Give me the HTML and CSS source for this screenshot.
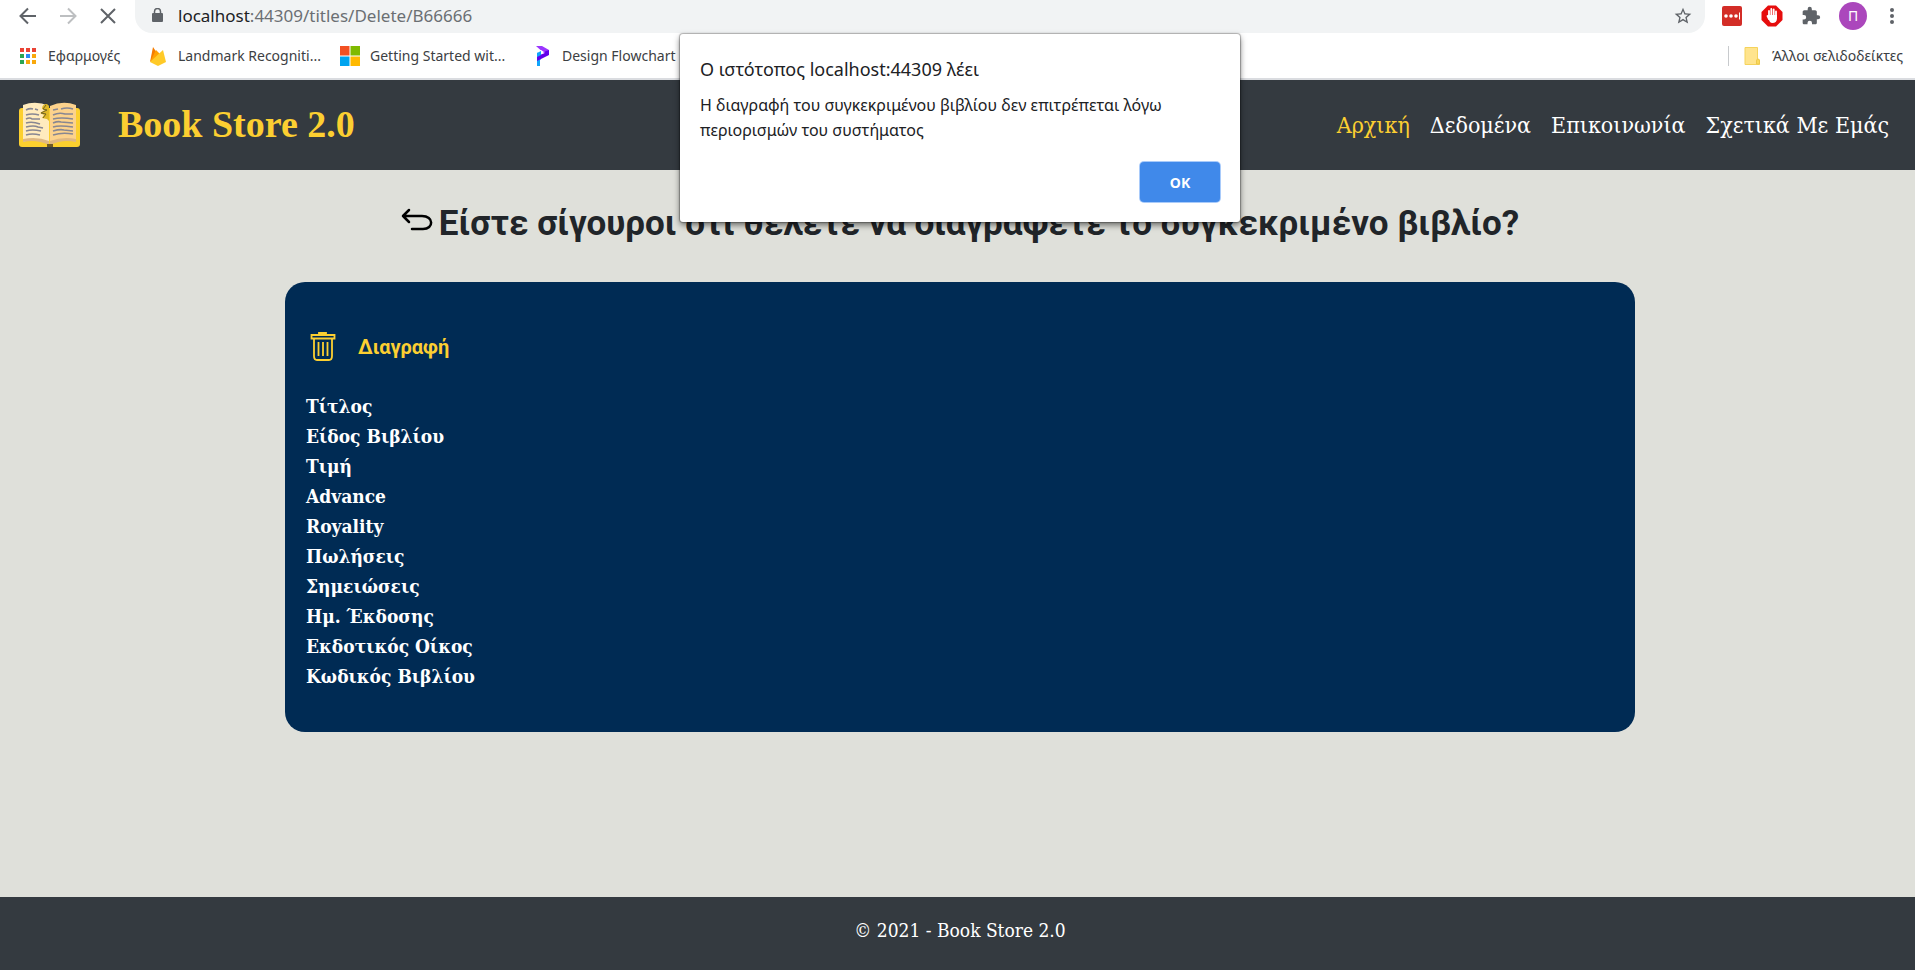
FILE: index.html
```html
<!DOCTYPE html>
<html lang="el">
<head>
<meta charset="utf-8">
<title>Book Store 2.0</title>
<link rel="stylesheet" href="styles.css">
</head>
<body>
<div class="browser">
  <div class="toolbar">
    <div class="nav-buttons">
      <button type="button" class="icon-button" aria-label="Πίσω"><svg width="20" height="20" viewBox="0 0 20 20" fill="none" stroke="#5f6368" stroke-width="2"><path d="M18 10H3M10 2.500L2.500 10l7.500 7.500"/></svg></button>
      <button type="button" class="icon-button" aria-label="Εμπρός"><svg width="20" height="20" viewBox="0 0 20 20" fill="none" stroke="#bdbfc1" stroke-width="2"><path d="M2 10h15M10 2.500l7.500 7.500-7.500 7.500"/></svg></button>
      <button type="button" class="icon-button" aria-label="Διακοπή"><svg width="20" height="20" viewBox="0 0 20 20" fill="none" stroke="#5f6368" stroke-width="2"><path d="M3 3l14 14M17 3L3 17"/></svg></button>
    </div>
    <div class="address">
      <svg width="12" height="16" viewBox="0 0 12 16"><rect x="1" y="5" width="11" height="9" rx="1" fill="#5f6368"/><path d="M3.500 6V3.500a3 3 0 0 1 6 0V6" fill="none" stroke="#5f6368" stroke-width="1.500"/></svg>
      <span class="url"><span class="host">localhost</span>:44309/titles/Delete/B66666</span>
      <svg class="star" width="20" height="20" viewBox="0 0 24 24" fill="#5f6368"><path d="M22 9.240l-7.190-.62L12 2 9.190 8.630 2 9.240l5.460 4.730L5.820 21 12 17.270 18.180 21l-1.630-7.030L22 9.240zM12 15.400l-3.760 2.270 1-4.280-3.320-2.880 4.380-.38L12 6.100l1.710 4.040 4.380.38-3.320 2.880 1 4.280L12 15.400z"/></svg>
    </div>
    <div class="extensions">
      <svg width="22" height="22" viewBox="0 0 22 22"><rect x="1" y="1" width="20" height="20" rx="2" fill="#d32d27"/><g fill="#fff"><circle cx="5" cy="11" r="1.800"/><circle cx="10" cy="11" r="1.800"/><circle cx="15" cy="11" r="1.800"/><path d="M18 7.500h1v7h-1z"/></g></svg>
      <svg width="22" height="22" viewBox="0 0 22 22"><path d="M7 .5h8L21.500 7v8L15 21.500H7L.5 15V7z" fill="#e60d0d"/><g fill="none" stroke="#fff" stroke-width="1.800" stroke-linecap="round"><path d="M8 11V6M10.300 10V4M12.700 10V4.500M15 12V6.500M8 14l-1.500-3"/></g><path d="M7 10h9v3.500c0 3-2 4.500-4.500 4.500S8.500 16 7 13z" fill="#fff"/></svg>
      <svg width="20" height="20" viewBox="0 0 24 24" fill="#5f6368"><path d="M20.500 11H19V7c0-1.100-.9-2-2-2h-4V3.500a2.500 2.500 0 0 0-5 0V5H4c-1.100 0-2 .9-2 2v3.800h1.500a2.700 2.700 0 0 1 0 5.400H2V20c0 1.100.9 2 2 2h3.800v-1.500a2.700 2.700 0 0 1 5.400 0V22H17c1.100 0 2-.9 2-2v-4h1.500a2.500 2.500 0 0 0 0-5z"/></svg>
      <button type="button" class="avatar">Π</button>
      <svg width="14" height="18" viewBox="0 0 14 18" fill="#5f6368"><circle cx="7" cy="3" r="2"/><circle cx="7" cy="9" r="2"/><circle cx="7" cy="15" r="2"/></svg>
    </div>
  </div>
  <div class="bookmarks">
    <a href="#" class="bookmark apps"><svg width="16" height="16" viewBox="0 0 16 16"><path d="M0 0h4v4H0zM6 0h4v4H6zM12 0h4v4h-4z" fill="#ea4335"/><path d="M0 6h4v4H0zM0 12h4v4H0z" fill="#2aa553"/><path d="M6 6h4v4H6z" fill="#2a8af5"/><path d="M12 6h4v4h-4zM6 12h4v4H6zM12 12h4v4h-4z" fill="#f9a80b"/></svg>Εφαρμογές</a>
    <a href="#" class="bookmark firebase"><svg width="16" height="20" viewBox="0 0 16 20"><path d="M0 16L3 1l4 6z" fill="#f57c00"/><path d="M0 16L6 4l5 5z" fill="#ffa000"/><path d="M0 16L13 4l3 12-8 4z" fill="#ffca28"/></svg>Landmark Recogniti...</a>
    <a href="#" class="bookmark microsoft"><svg width="20" height="20" viewBox="0 0 20 20"><path d="M0 0h9.500v9.500H0z" fill="#f25022"/><path d="M10.500 0H20v9.500h-9.500z" fill="#7fba00"/><path d="M0 10.500h9.500V20H0z" fill="#00a4ef"/><path d="M10.500 10.500H20V20h-9.500z" fill="#ffb900"/></svg>Getting Started wit...</a>
    <a href="#" class="bookmark flowchart"><svg width="14" height="20" viewBox="0 0 14 20"><path d="M1 7l4-2v8l-1 1v6H1z" fill="#10a5fb"/><path d="M0 0h6l7 4v2L9 8z" fill="#9b35ff"/><path d="M9 5.500L13 4v5L1 15v-5l8-3z" fill="#6200ea"/><path d="M1 6l4-2 3 2-4 2.500z" fill="#fff"/><path d="M1 7l4-2v4l-4 2z" fill="#10a5fb"/></svg>Design Flowchart</a>
    <a href="#" class="bookmark other"><svg width="16" height="18" viewBox="0 0 16 18"><path d="M1 .5h12.500V12l2 1v4.500H1z" fill="#ffe48d" stroke="#f5d35c"/><path d="M12.500 17v-3q0-2 1.500-2t1.500 2v3z" fill="#fbd95c" stroke="#edc84c"/></svg>Άλλοι σελιδοδείκτες</a>
  </div>
</div>
<header class="site-header">
  <a href="#" class="brand">
    <svg width="62" height="46" viewBox="0 0 62 46"><rect x="0" y="6" width="61" height="39" rx="3" fill="#fcd02f"/><path d="M4 3Q17-2 30 4v37Q17 34 4 40z" fill="#ffebbd"/><path d="M31 4Q44-2 57 3v37q-13-6-26 1z" fill="#fcd28c"/><path d="M4 37q14-3 26 2v4Q17 37 4 40zM31 39q13-5 26-2v3q-13-3-26 3z" fill="#dfb883"/><path d="M28 42h6v3h-6z" fill="#6d5826"/><g fill="none" stroke="#888792" stroke-width="1.600"><path d="M7 8q4-2 7-1M16 7l3 1M7 13q6-2 13 0M7 17q4-2 6 0l8 0M7 21q6-2 14 1M7 25q8-2 12 0l5 1M7 29q6-2 15 0M7 33q6-2 14 0M34 8l5-1M42 7q6-2 12 0M34 13q6-3 12-1l8 0M34 17q8-2 20 0M34 21q5-2 8-1l12 1M34 25q6-2 20 0M34 29q7-2 11-1l9 1M34 33q9-3 20-1"/></g><path d="M28 2q-5 0-5 5l3 1-5 3 4 2-2 3 5 1 2 2V4z" fill="#e1b925"/><path d="M27 3l-3 4 4 1-6 3 5 1-3 4" fill="none" stroke="#726426"/></svg>
    <span class="brand-name">Book Store 2.0</span>
  </a>
  <nav class="menu"><a href="#" class="active">Αρχική</a><a href="#">Δεδομένα</a><a href="#">Επικοινωνία</a><a href="#">Σχετικά Με Εμάς</a></nav>
</header>
<main class="content">
  <h1 class="question"><a href="#" aria-label="Επιστροφή"><svg width="32" height="26" viewBox="0 0 32 26" fill="none" stroke="#000" stroke-width="2.500" stroke-linecap="round" stroke-linejoin="round"><path d="M8 2L2 8l6 6M2 8h19c12 0 12 13 1 13H11"/></svg></a>Είστε σίγουροι ότι θέλετε να διαγράψετε το συγκεκριμένο βιβλίο?</h1>
  <section class="card">
    <button type="button" class="delete"><svg width="26" height="30" viewBox="0 0 26 30" fill="none" stroke="#fccf31" stroke-width="1.800"><path d="M9 2.500h7V1H9zM1.500 3h23v3.500h-23zM4 7v17q0 4 3 4h12q3 0 3-4V7M8.500 10v14M13 10v14M17.500 10v14"/></svg>Διαγραφή</button>
    <ul class="fields"><li>Τίτλος</li><li>Είδος Βιβλίου</li><li>Τιμή</li><li>Advance</li><li>Royality</li><li>Πωλήσεις</li><li>Σημειώσεις</li><li>Ημ. Έκδοσης</li><li>Εκδοτικός Οίκος</li><li>Κωδικός Βιβλίου</li></ul>
  </section>
</main>
<footer class="site-footer">© 2021 - Book Store 2.0</footer>
<div class="alert" role="alertdialog" aria-labelledby="alert-title" aria-describedby="alert-text">
  <h2 id="alert-title">Ο ιστότοπος localhost:44309 λέει</h2>
  <p id="alert-text">Η διαγραφή του συγκεκριμένου βιβλίου δεν επιτρέπεται λόγω περιορισμών του συστήματος</p>
  <button type="button" class="ok">OK</button>
</div>
</body>
</html>
```
FILE: styles.css
```css
* { box-sizing: border-box; }
body {
  margin: 0;
  min-height: 100vh;
  display: flex;
  flex-direction: column;
  background: #dfe0da;
  color: #212529;
  font-family: "Roboto Slab", "DejaVu Serif Condensed", "DejaVu Serif", serif;
}
a { color: inherit; text-decoration: none; }
button { border: 0; padding: 0; background: none; font: inherit; color: inherit; }
svg { display: block; flex-shrink: 0; }

.browser {
  height: 80px;
  background: #fff;
  border-bottom: 2px solid #dadce0;
  font-family: "Noto Sans", sans-serif;
  color: #3c4043;
}
.toolbar { display: flex; height: 33px; }
.nav-buttons { display: flex; gap: 20px; padding: 0 17px 2px 18px; align-items: center; }
.address {
  flex: 1;
  display: flex;
  align-items: center;
  gap: 15px;
  padding: 0 12px 2px 16px;
  background: #f1f3f4;
  border-radius: 0 0 17px 17px;
}
.url { font-size: 17px; color: #6b6f73; }
.host { color: #202124; }
.star { margin-left: auto; }
.extensions { display: flex; align-items: center; gap: 18px; padding: 0 16px 2px; }
.avatar { width: 28px; height: 28px; border-radius: 50%; background: #ab47bc; color: #fff; font-size: 14px; }
.bookmarks { display: flex; height: 45px; align-items: center; padding: 0 12px 0 20px; font-size: 14px; }
.bookmark { display: flex; align-items: center; gap: 12px; white-space: nowrap; }
.apps { width: 130px; }
.firebase { width: 190px; }
.microsoft { width: 196px; gap: 10px; }
.other { margin-left: auto; height: 20px; padding-left: 15px; border-left: 1px solid #c8cacd; }

.site-header {
  height: 90px;
  display: flex;
  align-items: center;
  justify-content: space-between;
  padding: 0 26px 0 19px;
  background: #343a40;
}
.brand { display: flex; align-items: center; gap: 37px; color: #fccf31; }
.brand-name { padding-bottom: 2px; font: bold 38px "Liberation Serif", serif; }
.menu { display: flex; gap: 20px; font-size: 23px; color: #fff; }
.active { color: #fccf31; }

.content { flex: 1; padding: 30px 0 48px 5px; }
.question {
  display: flex;
  justify-content: center;
  gap: 6px;
  margin: 0 0 34px;
  font: bold 35px/48px Roboto, sans-serif;
}
.question a { padding-top: 8px; }
.card {
  width: 71%;
  max-width: 1350px;
  min-height: 450px;
  margin: 0 auto;
  padding: 49px 21px 40px;
  border-radius: 20px;
  background: #002b54;
  color: #fff;
}
.delete { display: flex; align-items: center; gap: 22px; margin: 0 0 28px 4px; font: bold 20px/32px Roboto, sans-serif; color: #fccf31; }
.fields { list-style: none; margin: 0; padding: 0; font-size: 19px; line-height: 30px; font-weight: bold; }
.site-footer { height: 73px; padding: 0 0 6px 5px; background: #343a40; color: #fff; font-size: 19px; line-height: 67px; text-align: center; }

.alert {
  position: absolute;
  top: 34px;
  left: 680px;
  width: 560px;
  padding: 20px;
  border-radius: 3px;
  background: #fff;
  box-shadow: 0 0 1px 1px #0004, 0 3px 6px #0008;
  font-family: "Noto Sans", sans-serif;
  color: #202124;
}
.alert h2 { margin: 0 0 9px; font-size: 18px; line-height: 30px; font-weight: normal; }
.alert p { margin: 0 0 19px; font-size: 16px; line-height: 25px; }
.ok { display: block; width: 80px; height: 40px; margin-left: auto; border-radius: 4px; background: #4089ea; box-shadow: 0 0 0 1px #a9cbfa; color: #fff; font-size: 14px; font-weight: bold; }
```
